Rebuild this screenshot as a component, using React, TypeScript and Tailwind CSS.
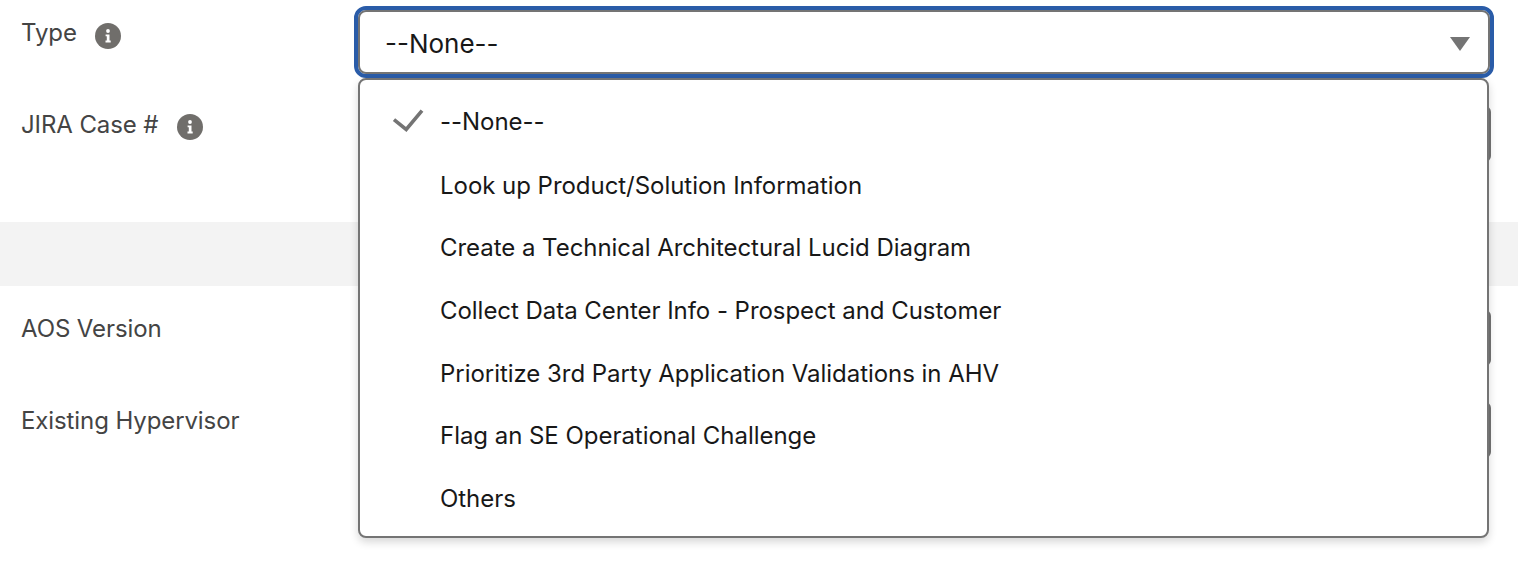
import React from 'react';

const options = [
  'Look up Product/Solution Information',
  'Create a Technical Architectural Lucid Diagram',
  'Collect Data Center Info - Prospect and Customer',
  'Prioritize 3rd Party Application Validations in AHV',
  'Flag an SE Operational Challenge',
  'Others',
];

const InfoIcon = () => (
  <svg viewBox="0 0 26 26" className="w-[26px] h-[26px] shrink-0">
    <circle cx="13" cy="13" r="13" fill="#706e6b" />
    <circle cx="13" cy="8" r="1.9" fill="#fff" />
    <path d="M10.6 11.4h3.9v6.2h1.2v1.9h-5.2v-1.9h1.3v-4.3h-1.2z" fill="#fff" />
  </svg>
);

const Field = ({ label, info, className }: { label: string; info?: boolean; className: string }) => (
  <div className={`flex pl-[21px] pr-[27px] ${className}`}>
    <div className="w-[337px] shrink-0 flex items-start gap-[19px] pt-[3px] text-[#444444] tracking-[-0.1px]">
      <span>{label}</span>
      {info && <span className="pt-[5px]"><InfoIcon /></span>}
    </div>
    <div className="flex-1 h-[56px] rounded-[6px] border-2 border-[#747474] bg-white" />
  </div>
);

export default function App() {
  return (
    <div className="relative h-[570px] w-[1518px] overflow-hidden bg-white text-[24px] leading-[32px] font-['Inter','Noto_Sans',sans-serif]">
      {/* Form behind the open menu */}
      <div className="flex flex-col">
        <div className="flex pl-[21px] pr-[28px] pt-[10px] h-[106px]">
          <div className="w-[337px] shrink-0 flex items-start gap-[18px] pt-[7px] text-[#444444] tracking-[-0.1px]">
            <span>Type</span>
            <span className="pt-[6px]"><InfoIcon /></span>
          </div>
          <div className="flex-1 h-[64px] rounded-[8px] border-2 border-[#747474] bg-white outline-4 outline-[#2a5ca8] flex items-center justify-between pl-[25px] pr-[18px] text-[26px] text-[#181818]">
            <span className="mt-[3px]">--None--</span>
            <svg viewBox="0 0 20 14" className="w-[20px] h-[14px] mt-[3px]">
              <path d="M0 0h20L10 14z" fill="#747474" />
            </svg>
          </div>
        </div>
        <Field label="JIRA Case #" info className="h-[116px]" />
        <div className="h-[64px] bg-[#f3f3f3]" />
        <Field label="AOS Version" className="h-[92px] mt-[24px]" />
        <Field label="Existing Hypervisor" className="h-[92px]" />
      </div>

      {/* Open menu */}
      <div className="absolute left-[358px] top-[78px] w-[1131px] h-[460px] rounded-[8px] border-2 border-[#747474] bg-white shadow-[0_4px_8px_rgba(0,0,0,0.16)] pt-[11px] text-[#181818] tracking-[-0.04px]">
        <div className="flex items-center h-[63.25px]">
          <svg viewBox="0 0 32 24" className="ml-[32px] mb-[4px] w-[32px] h-[24px] shrink-0">
            <path d="M2 10.6L14.2 20.4L30 1.6" fill="none" stroke="#747474" strokeWidth="3.6" />
          </svg>
          <span className="ml-[16px] mb-[2px]">--None--</span>
        </div>
        {options.map(o => (
          <div key={o} className="flex items-center h-[62.7px] pl-[80px]">{o}</div>
        ))}
      </div>
    </div>
  );
}
